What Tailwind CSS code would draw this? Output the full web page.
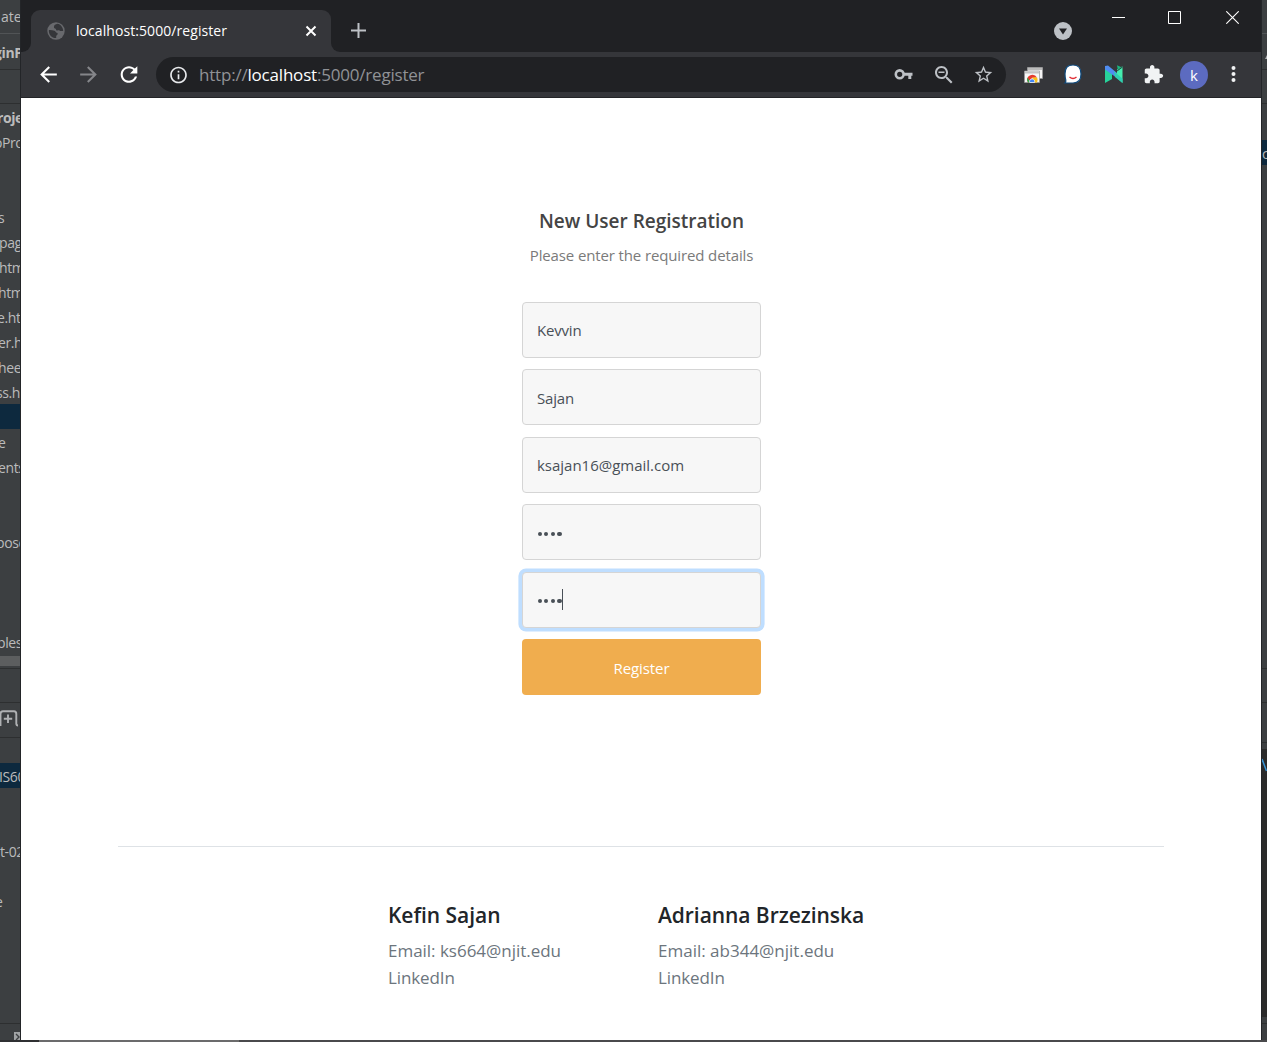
<!DOCTYPE html>
<html lang="en">
<head>
<meta charset="utf-8">
<title>localhost:5000/register</title>
<script src="https://cdn.jsdelivr.net/npm/@tailwindcss/browser@4"></script>
</head>
<body class="w-[1267px] h-[1042px] overflow-hidden bg-[#3c3f41] font-['Open_Sans','Noto_Sans',sans-serif]">
<div class="flex h-[1040px]">

  <!-- Editor window, left of the browser -->
  <aside class="w-[21px] h-full shrink-0 overflow-hidden border-r border-[#232528] bg-[#3c3f41] text-[14px] tracking-[-0.4px] text-[#bbbbbb] whitespace-nowrap leading-[27px]">
    <div class="h-[34px] pt-[3px] pl-px border-b border-[#515456] tracking-normal">ate</div>
    <div class="h-9 pt-[5px] border-b border-[#2d2f30] font-bold"><span class="-ml-[6px]">ginPage</span></div>
    <div class="h-[34px] border-b border-[#2d2f30]"></div>
    <div class="h-[25px] font-bold"><span class="-ml-[3px]">roject</span></div>
    <div class="h-[25px]"><span class="-ml-[6px]">oProject</span></div>
    <div class="h-[50px]"></div>
    <div class="h-[25px]"><span class="-ml-[2px]">s</span></div>
    <div class="h-[25px]"><span class="-ml-px">pages</span></div>
    <div class="h-[25px]"><span class="-ml-px">html</span></div>
    <div class="h-[25px]"><span class="-ml-[2px]">html</span></div>
    <div class="h-[25px]"><span class="-ml-[3px]">e.html</span></div>
    <div class="h-[25px]"><span class="-ml-[2px]">er.html</span></div>
    <div class="h-[25px]"><span class="-ml-[2px]">heet</span></div>
    <div class="h-[25px]"><span class="-ml-[4px]">ss.html</span></div>
    <div class="h-[25px] bg-[#0d293e]"></div>
    <div class="h-[25px]"><span class="-ml-[2px]">e</span></div>
    <div class="h-[25px]"><span class="-ml-[2px]">ents</span></div>
    <div class="h-[50px]"></div>
    <div class="h-[25px]"><span class="-ml-[4px]">pose</span></div>
    <div class="h-[75px]"></div>
    <div class="h-[27px]"><span class="-ml-[3px]">bles</span></div>
    <div class="h-[10px] bg-[#5c5e5f]"></div>
    <div class="h-[3px] border-b border-[#2d2f30]"></div>
    <div class="h-[34px] border-b border-[#2d2f30]"></div>
    <div class="h-[35px] pt-[7px] border-b border-[#2d2f30]">
      <svg width="20" height="18" viewBox="0 0 20 18" fill="none" stroke="#afb1b3" stroke-width="1.900"><path d="M.5 16V4Q.5 1.200 3 1.200H14Q16.300 1.200 16.300 4V13.500Q16.300 15.500 18 15.500M8 4.500V13M3.800 8.800H12.200"/></svg>
    </div>
    <div class="h-[25px]"></div>
    <div class="h-[25px] bg-[#0d293e]"><span class="-ml-px">IS601</span></div>
    <div class="h-[50px]"></div>
    <div class="h-[25px]">t-02</div>
    <div class="h-[25px]"></div>
    <div class="h-[25px]"><span class="-ml-[5px]">e</span></div>
    <div class="h-[111px] border-b border-[#2d2f30]"></div>
    <div class="flex h-[16px] items-end justify-end">
      <svg width="6" height="8" viewBox="0 0 6 8"><path fill="#a0a3a5" d="M0 0h6v8H0z"/><path d="M2 2l3 3-3 3" fill="none" stroke="#3c3f41" stroke-width="1.400"/></svg>
    </div>
  </aside>

  <!-- Browser window -->
  <main class="flex h-full w-[1240px] shrink-0 flex-col bg-white">
    <header class="flex h-[52px] shrink-0 bg-[#202124]">
      <div class="flex h-full w-[10px] items-end bg-[#35363a]"><div class="h-full w-full rounded-br-[9px] bg-[#202124]"></div></div>
      <div class="mt-[10px] flex h-[42px] w-[300px] items-center rounded-t-[9px] bg-[#35363a] pl-4 pr-[14px]">
        <svg width="18" height="18" viewBox="0 0 18 18"><circle cx="9" cy="9" r="8.700" fill="#68696d"/><path fill="#35363a" d="M10.500 1.800c-2 .3-3.600 1.500-3.600 3.100 0 1.200 1 1.400 1.700 1.800.8.500.2 1.500 1.200 1.700 1 .3 1.900-.5 2.600.1.700.600 2.500.6 3.800.4C16 5.200 13.700 2.400 10.500 1.800zM1.900 8c1.800-.1 3.900.1 5.500.8 1.500.700 1.200 1.800 2.400 1.900 1 .2 1 .9.8 1.500-.3.800-1.200 1-1.400 1.900-.1.700.1 1.400 0 2C5 16.300 1.300 12.300 1.900 8z"/></svg>
        <span class="mb-0.5 ml-[11px] grow text-[14px] tracking-[0.068px] text-white">localhost:5000/register</span>
        <svg width="12" height="12" viewBox="0 0 12 12" stroke="#fff" stroke-width="2"><path d="M1.500 1.500l9 9M10.500 1.500l-9 9"/></svg>
      </div>
      <div class="h-full w-[10px] bg-[#35363a]"><div class="h-full w-full rounded-bl-[9px] bg-[#202124]"></div></div>
      <svg class="ml-[10px] mt-[23px]" width="15" height="15" viewBox="0 0 15 15" stroke="#bdc1c6" stroke-width="2"><path d="M7.500 0v15M0 7.500h15"/></svg>
      <div class="grow"></div>
      <svg class="mt-[22px]" width="18" height="18" viewBox="0 0 18 18"><circle cx="9" cy="9" r="9" fill="#bdc1c6"/><path d="M5 6.500h8L9 12.500z" fill="#202124"/></svg>
      <svg class="ml-[40px] mt-[17px]" width="13" height="1"><path d="M0 0h13v1H0z" fill="#fff"/></svg>
      <svg class="ml-[43px] mt-[11px]" width="13" height="13" viewBox="0 0 13 13"><path d="M.5.5h12v12H.5z" fill="none" stroke="#fff"/></svg>
      <svg class="ml-[45px] mr-[22px] mt-[11px]" width="13" height="13" viewBox="0 0 13 13" stroke="#fff" stroke-width="1.100"><path d="M.3.3l12.400 12.400M12.700.3L.3 12.700"/></svg>
    </header>

    <nav class="flex h-[46px] shrink-0 items-start border-b border-[#232427] bg-[#35363a] pt-[5px]">
      <svg class="ml-[15px] mt-[5px]" width="25" height="25" viewBox="0 0 24 24" fill="#fff"><path d="M20 11H7.830l5.590-5.590L12 4l-8 8 8 8 1.410-1.410L7.830 13H20v-2z"/></svg>
      <svg class="ml-[15px] mt-[5px]" width="25" height="25" viewBox="0 0 24 24" fill="#85868a"><path d="M12 4l-1.410 1.410L16.170 11H4v2h12.170l-5.580 5.590L12 20l8-8z"/></svg>
      <svg class="ml-[15px] mt-[5px]" width="26" height="25" viewBox="0 0 24 24" fill="#fff"><path d="M17.650 6.350C16.200 4.900 14.210 4 12 4c-4.420 0-7.990 3.580-7.990 8s3.570 8 7.990 8c3.730 0 6.840-2.550 7.730-6h-2.080c-.82 2.330-3.040 4-5.650 4-3.310 0-6-2.690-6-6s2.690-6 6-6c1.660 0 3.140.69 4.220 1.780L13 11h7V4l-2.350 2.350z"/></svg>
      <div class="ml-[14px] flex h-[35px] w-[850px] items-center rounded-full bg-[#202124] pl-3">
        <svg width="21" height="20" viewBox="0 0 24 24" fill="#e8eaed"><path d="M11 7h2v2h-2zm0 4h2v6h-2zm1-9C6.480 2 2 6.480 2 12s4.480 10 10 10 10-4.480 10-10S17.520 2 12 2zm0 18c-4.410 0-8-3.590-8-8s3.590-8 8-8 8 3.590 8 8-3.590 8-8 8z"/></svg>
        <span class="ml-[10px] grow text-[17px] tracking-[-0.2px] text-[#909296]">http://<span class="text-white">localhost</span>:5000/register</span>
        <svg width="20" height="20" viewBox="0 0 20 20" fill="none" stroke="#bdc1c6"><circle cx="5.700" cy="9.300" r="3.900" stroke-width="2.600"/><path d="M9.500 9.300h9M15.800 9v5" stroke-width="3"/></svg>
        <svg class="ml-[18px]" width="24" height="24" viewBox="0 0 24 24" fill="#bdc1c6"><path d="M15.500 14h-.79l-.28-.27C15.410 12.590 16 11.110 16 9.500 16 5.910 13.090 3 9.500 3S3 5.910 3 9.500 5.910 16 9.500 16c1.610 0 3.090-.59 4.230-1.570l.27.28v.79l5 4.990L20.490 19l-4.990-5zm-6 0C7.010 14 5 11.990 5 9.500S7.010 5 9.500 5 14 7.010 14 9.500 11.990 14 9.500 14zM6.500 8.600h6v1.500h-6z"/></svg>
        <svg class="ml-[17px] mr-[12px]" width="21" height="21" viewBox="0 0 24 24" fill="#bdc1c6"><path d="M22 9.240l-7.190-.62L12 2 9.190 8.630 2 9.240l5.460 4.730L5.820 21 12 17.270 18.180 21l-1.630-7.030L22 9.240zM12 15.400l-3.760 2.270 1-4.280-3.320-2.880 4.380-.38L12 6.100l1.710 4.040 4.380.38-3.320 2.880 1 4.280L12 15.400z"/></svg>
      </div>
      <!-- Extensions -->
      <svg class="ml-[18px] mt-[10px]" width="19" height="16" viewBox="0 0 19 16"><path fill="#f5f5f5" stroke="#999" stroke-width=".7" d="M3.500.5h15v11h-15z"/><path fill="#bbb" d="M4 1h14v2H4z"/><path fill="#f7f7f7" stroke="#999" stroke-width=".7" d="M.5 4h15v11.500H.5z"/><path fill="#c4c4c4" d="M1 4.500h14v2H1z"/><path fill="#e53a2e" d="M3 13a5.400 5.400 0 0 1 10-2.500L8 11l-2.500 4.500H4z"/><path fill="#2da94f" d="M3.500 10.500L6.500 15.500H4A5 5 0 0 1 3.500 10.500z"/><path fill="#fbc116" d="M8 10.500h5.200q1 2.500-.2 5H9z"/><path fill="#4285f4" stroke="#fff" stroke-width=".7" d="M5.700 15.500a2.600 2.600 0 1 1 4.800 0z"/></svg>
      <svg class="ml-5 mt-[7px]" width="20" height="20" viewBox="0 0 20 20"><path d="M10 1C16 1 18 4 18 10S16 19 10 19H2q1.200-1 .8-3Q2 14 2 10C2 4 4 1 10 1z" fill="#fff" stroke="#104a7c" stroke-width="1.200"/><path d="M6.500 13q3.500 3 7 0" fill="none" stroke="#e12d35" stroke-width="1.400"/></svg>
      <svg class="ml-[21px] mt-2" width="20" height="19" viewBox="0 0 20 19"><path fill="#27d39b" d="M1 1l7 6v7l-7 4z"/><path fill="#45edae" d="M13 4.500l5.500-3.200V18L13 13z"/><path fill="#508df0" d="M1 1l3-.5L13 8v5L1 4.500z"/><path fill="#2ecfb2" d="M10 6.200l8.500 7.500V18L11 12z"/><path fill="#1bb780" d="M13 .3l5 2.200-4 3z"/><path d="M13 6l5.500-4" stroke="#263e3c" stroke-width=".9"/></svg>
      <svg class="ml-[19px] mt-[7px]" width="21" height="21" viewBox="0 0 24 24" fill="#f1f3f4"><path d="M20.500 11H19V7c0-1.100-.9-2-2-2h-4V3.500C13 2.120 11.880 1 10.500 1S8 2.120 8 3.500V5H4c-1.100 0-1.990.9-1.990 2v3.800H3.500c1.490 0 2.700 1.210 2.700 2.700s-1.210 2.700-2.700 2.700H2V20c0 1.100.9 2 2 2h3.800v-1.500c0-1.490 1.210-2.700 2.700-2.700 1.490 0 2.700 1.210 2.700 2.700V22H17c1.100 0 2-.9 2-2v-4h1.500c1.380 0 2.500-1.120 2.500-2.500S21.880 11 20.500 11z"/></svg>
      <div class="ml-4 mt-1 flex size-7 items-center justify-center rounded-full bg-[#5c6bc0] text-[15px] text-white">k</div>
      <svg class="ml-[23px] mt-2" width="5" height="18" viewBox="0 0 5 18" fill="#f1f3f4"><circle cx="2.500" cy="3" r="2"/><circle cx="2.500" cy="9" r="2"/><circle cx="2.500" cy="15" r="2"/></svg>
    </nav>

    <section class="mx-auto flex w-[239px] flex-col gap-[11.5px] pt-[107px] text-[15px] text-[#495057]">
      <div class="h-[85.250px] pl-px text-center">
        <h1 class="-mx-5 h-8 text-[19px] font-semibold leading-8 text-[#444]">New User Registration</h1>
        <p class="-mx-5 mt-0.5 leading-8 tracking-[-0.126px] text-[#7a7a7a]">Please enter the required details</p>
      </div>
      <div class="flex h-14 items-center rounded border border-[#d5d5d5] bg-[#f7f7f7] px-[14.5px] tracking-[-0.18px]">Kevvin</div>
      <div class="flex h-14 items-center rounded border border-[#d5d5d5] bg-[#f7f7f7] px-[14.5px] pt-0.5 tracking-[-0.18px]">Sajan</div>
      <div class="flex h-14 items-center rounded border border-[#d5d5d5] bg-[#f7f7f7] px-[14.5px] tracking-[-0.014px]">ksajan16@gmail.com</div>
      <div class="flex h-14 items-center rounded border border-[#d5d5d5] bg-[#f7f7f7] px-[14px] pt-[3px]">
        <span class="flex gap-[2.300px] pl-px"><i class="size-[4.300px] rounded-full bg-[#495057]"></i><i class="size-[4.300px] rounded-full bg-[#495057]"></i><i class="size-[4.300px] rounded-full bg-[#495057]"></i><i class="size-[4.300px] rounded-full bg-[#495057]"></i></span>
      </div>
      <div class="flex h-14 items-center rounded border border-[#d5d5d5] bg-[#f7f7f7] px-[14px] shadow-[0_0_0_3.600px_#bfdeff]">
        <span class="flex gap-[2.300px] pl-px pt-[2px]"><i class="size-[4.300px] rounded-full bg-[#495057]"></i><i class="size-[4.300px] rounded-full bg-[#495057]"></i><i class="size-[4.300px] rounded-full bg-[#495057]"></i><i class="size-[4.300px] rounded-full bg-[#495057]"></i></span>
        <span class="h-[21px] w-px bg-[#495057]"></span>
      </div>
      <button class="h-14 rounded bg-[#f0ad4e] pl-px pt-0.5 tracking-[-0.083px] text-white">Register</button>
    </section>

    <footer class="mx-auto mt-[150.750px] flex w-[1046px] border-t border-[#dee2e6] pt-[54px] text-[17px] leading-[27px] text-[#6c757d]">
      <div class="ml-[270px] w-[270px]">
        <h2 class="mb-2 text-[21px] font-semibold leading-[28px] tracking-[-0.03px] text-[#212529]">Kefin Sajan</h2>
        <p class="tracking-[-0.02px]">Email: ks664@njit.edu</p>
        <p class="tracking-[-0.1px]">LinkedIn</p>
      </div>
      <div>
        <h2 class="mb-2 text-[21px] font-semibold leading-[28px] tracking-[-0.058px] text-[#212529]">Adrianna Brzezinska</h2>
        <p>Email: ab344@njit.edu</p>
        <p class="tracking-[-0.1px]">LinkedIn</p>
      </div>
    </footer>
  </main>

  <!-- Editor window, right of the browser -->
  <aside class="h-full w-[6px] shrink-0 overflow-hidden border-l border-[#232528] text-[14px] leading-[27px] text-[#bbbbbb]">
    <div class="h-[34px] border-b border-[#515456]"></div>
    <div class="h-9 border-b border-[#2d2f30] pt-5"><svg width="5" height="7"><path d="M3 5l2-4v4z" fill="#afb1b3"/></svg></div>
    <div class="h-[34px] border-b border-[#2d2f30]"></div>
    <div class="h-[36px]"></div>
    <div class="h-[25px] bg-[#0d293e]">c</div>
    <div class="h-[504px] border-b border-[#2d2f30]"></div>
    <div class="h-[34px] border-b border-[#2d2f30]"></div>
    <div class="h-[40px] border-b border-[#2d2f30]"></div>
    <div class="h-[6px]"></div>
    <div class="h-[268px] bg-[#2b2b2b] pt-[9px]"><svg width="5" height="14" viewBox="0 0 5 14"><path d="M0 1l4.500 12" stroke="#3993d4" stroke-width="1.500"/></svg></div>
    <div class="h-[7px] border-b border-[#2d2f30]"></div>
  </aside>
</div>
<div class="flex h-[2px] bg-[#4a4a4c]"><div class="w-[39px] bg-[#2f3032]"></div><div class="w-[200px] bg-[#6b6b6c]"></div></div>
</body>
</html>
